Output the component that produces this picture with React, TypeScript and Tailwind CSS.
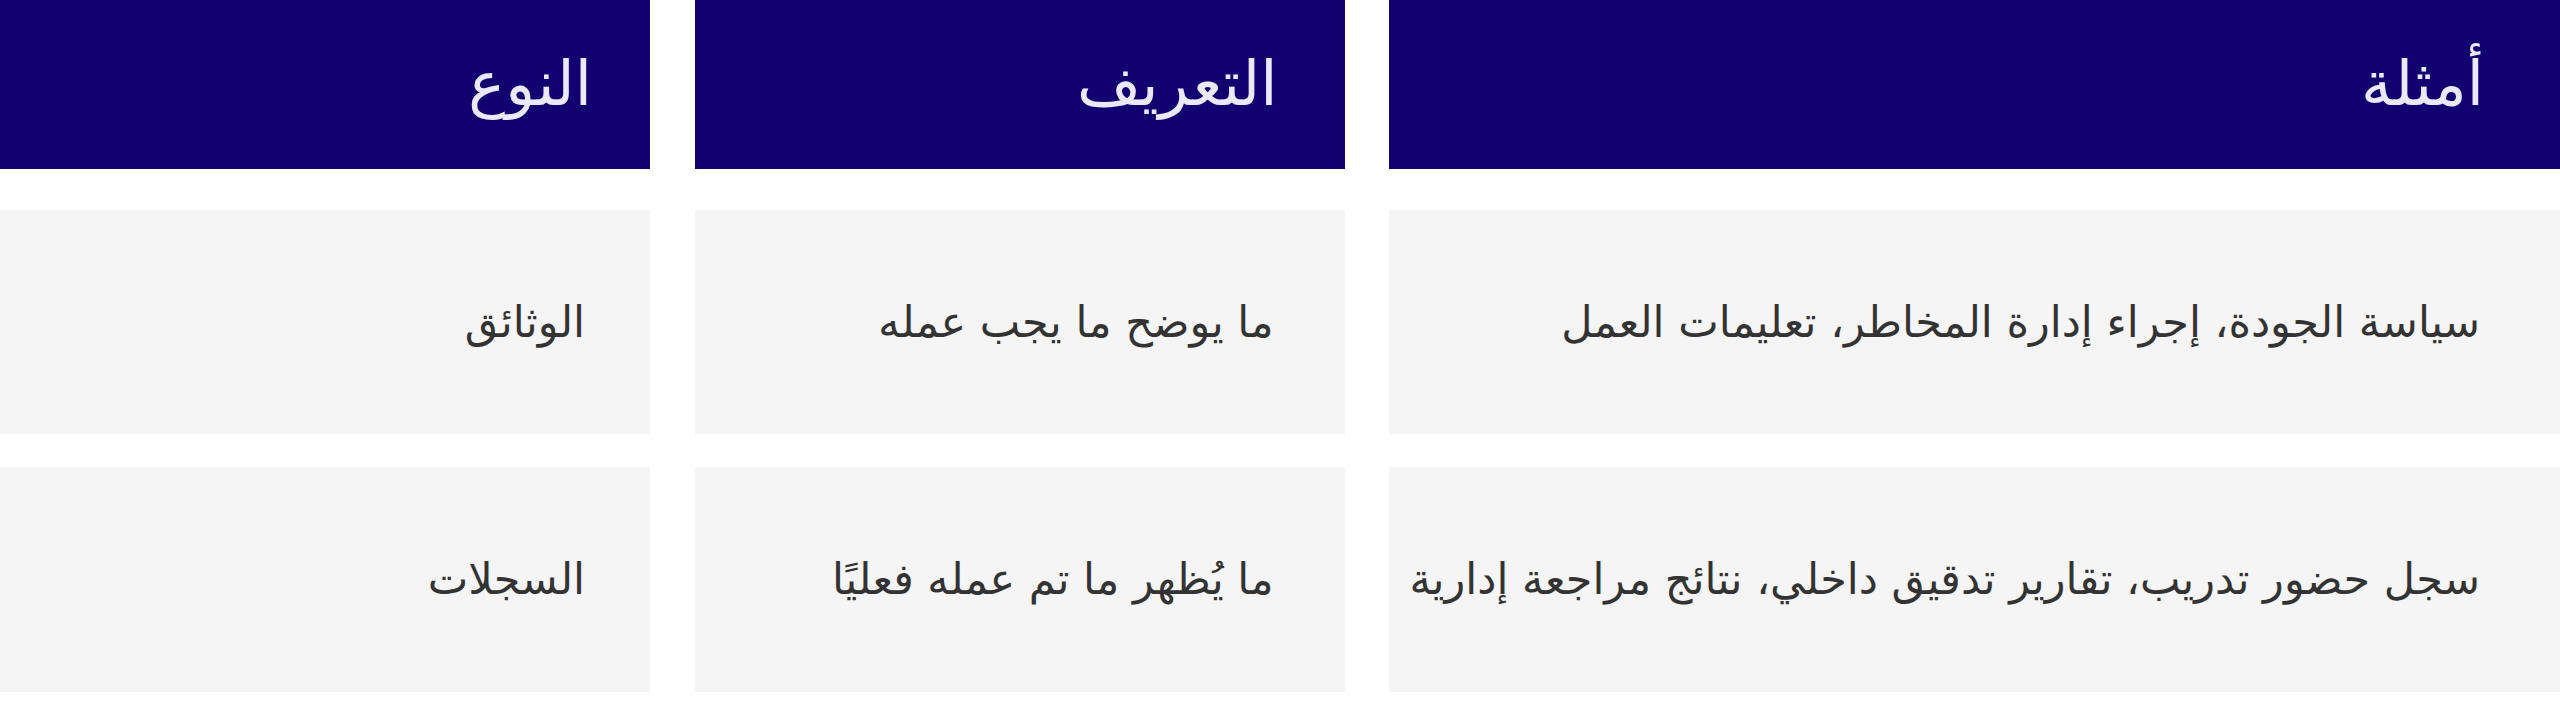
import React from "react";

const cols = [
  { head: "النوع", r1: "الوثائق", r2: "السجلات", hp: "pr-[58px]", bp: "pr-[65px]" },
  { head: "التعريف", r1: "ما يوضح ما يجب عمله", r2: "ما يُظهر ما تم عمله فعليًا", hp: "pr-[67px]", bp: "pr-[71px]" },
  {
    head: "أمثلة",
    r1: "سياسة الجودة، إجراء إدارة المخاطر، تعليمات العمل",
    r2: "سجل حضور تدريب، تقارير تدقيق داخلي، نتائج مراجعة إدارية",
    hp: "pr-[76px]",
    bp: "pr-[80px]",
  },
];

export default function App() {
  return (
    <div
      className="w-[2560px] h-[714px] bg-white overflow-hidden"
      style={{ fontFamily: '"DejaVu Sans", "Noto Sans", sans-serif' }}
    >
      <div className="grid grid-cols-[650px_650px_1171px] gap-x-[44.5px] grid-rows-[169px_224px_225px] gap-y-0">
        {cols.map((c, i) => (
          <div
            key={"h" + i}
            dir="rtl"
            className={`bg-[#130070] text-[#ebe8fa] text-[62px] leading-none flex items-center pb-[2px] ${c.hp}`}
          >
            {c.head}
          </div>
        ))}
        {cols.map((c, i) => (
          <div
            key={"a" + i}
            dir="rtl"
            className={`mt-[41px] -mb-[41px] bg-[#f5f5f5] text-[#333333] text-[43px] leading-none flex items-center ${c.bp}`}
          >
            {c.r1}
          </div>
        ))}
        {cols.map((c, i) => (
          <div
            key={"b" + i}
            dir="rtl"
            className={`mt-[74px] -mb-[74px] bg-[#f5f5f5] text-[#333333] text-[43px] leading-none flex items-center ${c.bp}`}
          >
            {c.r2}
          </div>
        ))}
      </div>
    </div>
  );
}
